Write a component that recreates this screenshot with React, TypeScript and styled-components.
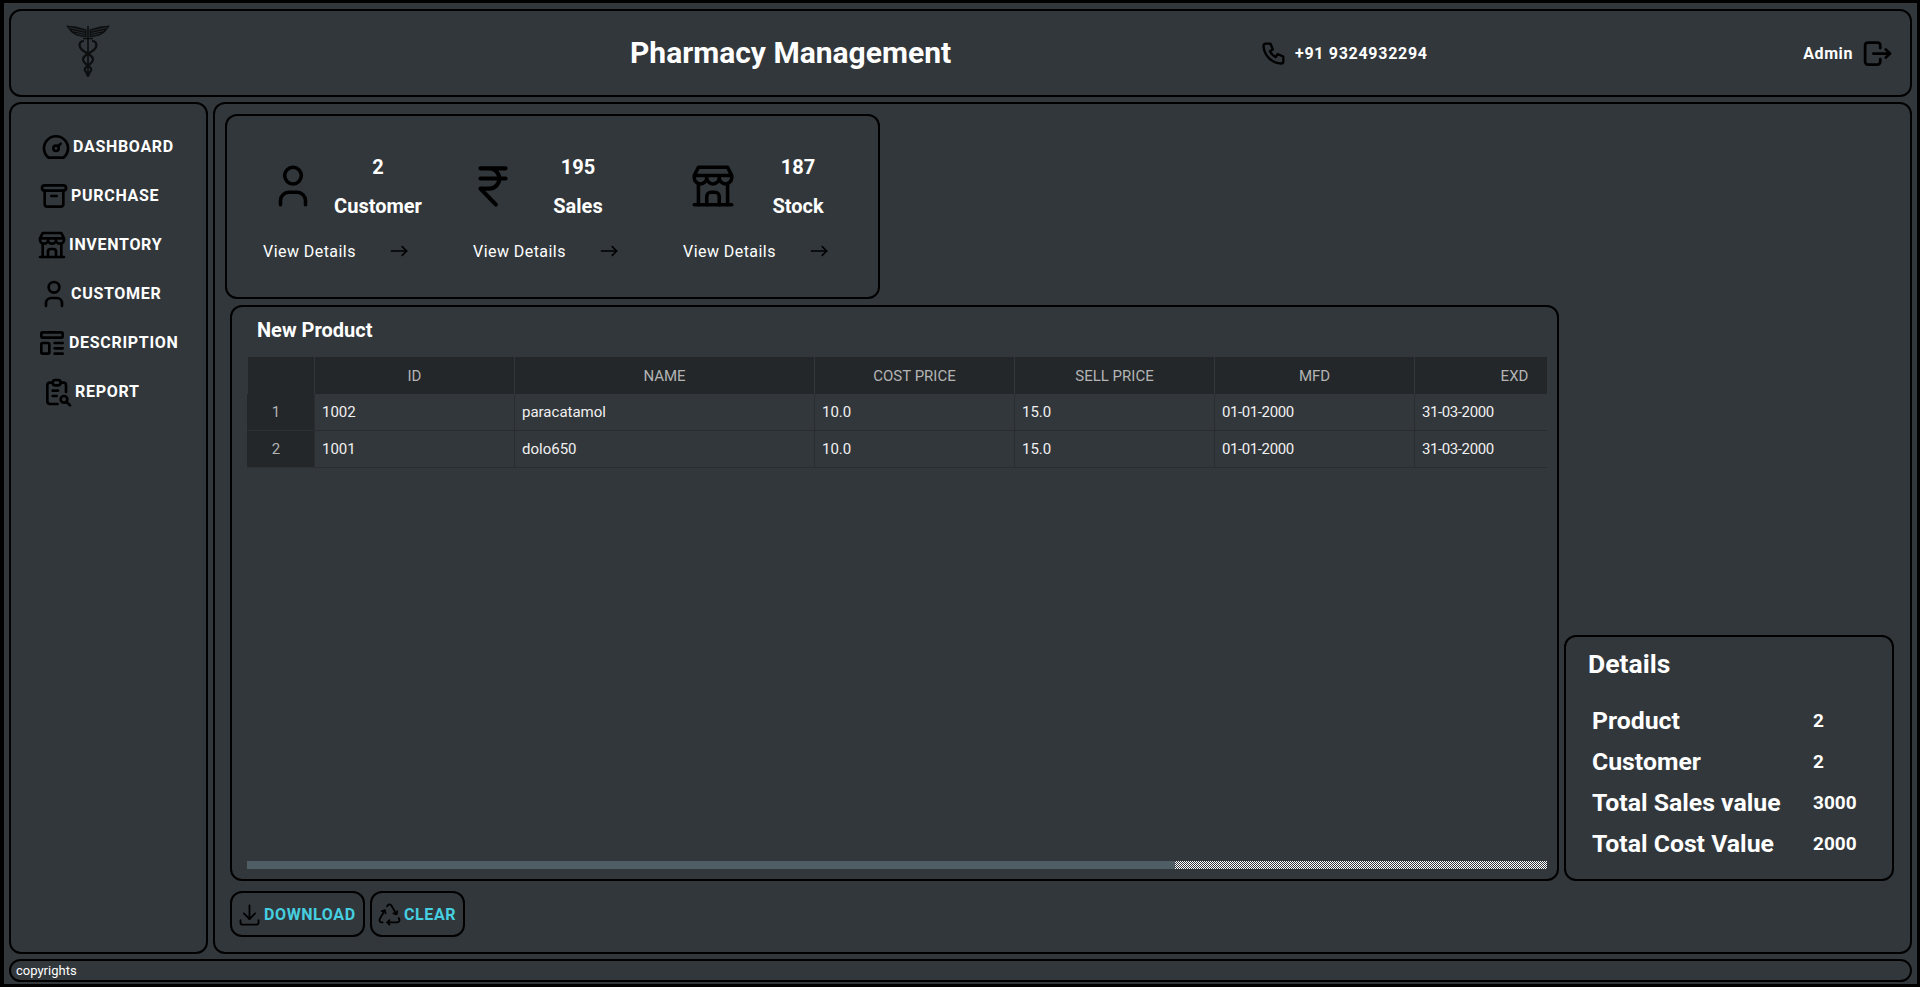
import styled, { createGlobalStyle } from 'styled-components';
import {
  TbArchive,
  TbArrowNarrowRight,
  TbBuildingStore,
  TbDashboard,
  TbDownload,
  TbLogout,
  TbPhone,
  TbRecycle,
  TbReportSearch,
  TbTemplate,
  TbUser,
} from 'react-icons/tb';

const Rupee = () => (
  <svg viewBox="0 0 24 24" fill="none" stroke="currentColor" strokeLinecap="round" strokeLinejoin="round">
    <path d="M17.200 4.700H6.800h3.600a4.200 4.200 0 0 1 0 8.400H6.800l6.400 6.600M6.800 8.900H17.200" />
  </svg>
);

const navItems = [
  { label: 'DASHBOARD', icon: <TbDashboard />, indent: 29 },
  { label: 'PURCHASE', icon: <TbArchive />, indent: 27 },
  { label: 'INVENTORY', icon: <TbBuildingStore />, indent: 25 },
  { label: 'CUSTOMER', icon: <TbUser />, indent: 27 },
  { label: 'DESCRIPTION', icon: <TbTemplate />, indent: 25 },
  { label: 'REPORT', icon: <TbReportSearch />, indent: 31 },
];

const stats = [
  { value: '2', label: 'Customer', icon: <TbUser />, iconWidth: 60, iconSize: 50 },
  { value: '195', label: 'Sales', icon: <Rupee />, iconWidth: 40, iconSize: 58 },
  { value: '187', label: 'Stock', icon: <TbBuildingStore />, iconWidth: 60, iconSize: 50 },
];

const columns = [
  { label: 'ID', width: 200 },
  { label: 'NAME', width: 300 },
  { label: 'COST PRICE', width: 200 },
  { label: 'SELL PRICE', width: 200 },
  { label: 'MFD', width: 200 },
  { label: 'EXD', width: 200 },
];

const products = [
  ['1002', 'paracatamol', '10.0', '15.0', '01-01-2000', '31-03-2000'],
  ['1001', 'dolo650', '10.0', '15.0', '01-01-2000', '31-03-2000'],
];

const details = [
  ['Product', '2'],
  ['Customer', '2'],
  ['Total Sales value', '3000'],
  ['Total Cost Value', '2000'],
];

const Caduceus = () => (
  <svg width="44" height="54" viewBox="0 0 44 54" fill="none" stroke="#0c0e10">
    <path
      d="M20.5 13C14 13 8 11 5 8L0 1.5 10 2.5 20.5 5.5ZM23.5 13C30 13 36 11 39 8L44 1.5 34 2.5 23.5 5.5Z"
      fill="#0c0e10"
      stroke="none"
    />
    <path
      d="M3 3.500 19 7M6 6.500l13 3M10 9.500l9 2M41 3.500 25 7M38 6.500l-13 3M34 9.500l-9 2"
      stroke="#32373b"
      strokeWidth="0.7"
    />
    <path d="M22 2V53" strokeWidth="1.6" />
    <path d="M17 14.500H27" strokeWidth="1.6" />
    <path
      d="M18 17C14 17 13 20 14 23 15.500 27 20 28 24 31 28 34 28 37 24 40 20 43 17 45 20 48L22 52"
      strokeWidth="2.2"
    />
    <path
      d="M26 17C30 17 31 20 30 23 28.500 27 24 28 20 31 16 34 16 37 20 40 24 43 27 45 24 48L22 52"
      strokeWidth="2.2"
    />
  </svg>
);

const App = () => {
  return (
    <Screen>
      <GlobalStyle />
      <Header>
        <Logo>
          <Caduceus />
        </Logo>
        <Title>Pharmacy Management</Title>
        <Phone>
          <TbPhone />
          +91 9324932294
        </Phone>
        <Admin>
          Admin
          <TbLogout />
        </Admin>
      </Header>

      <Sidebar>
        {navItems.map((item) => (
          <NavItem key={item.label} $indent={item.indent}>
            {item.icon}
            {item.label}
          </NavItem>
        ))}
      </Sidebar>

      <Main>
        <StatsCard>
          {stats.map((stat) => (
            <Stat key={stat.label}>
              <StatTop>
                <StatIcon $width={stat.iconWidth} $size={stat.iconSize}>
                  {stat.icon}
                </StatIcon>
                <StatText>
                  <StatValue>{stat.value}</StatValue>
                  <StatLabel>{stat.label}</StatLabel>
                </StatText>
              </StatTop>
              <ViewDetails>
                View Details
                <TbArrowNarrowRight />
              </ViewDetails>
            </Stat>
          ))}
        </StatsCard>

        <MiddleRow>
          <ProductPanel>
            <PanelTitle>New Product</PanelTitle>
            <TableClip>
              <Table>
                <thead>
                  <tr>
                    <HeadCell $width={67} />
                    {columns.map((column) => (
                      <HeadCell key={column.label} $width={column.width}>
                        {column.label}
                      </HeadCell>
                    ))}
                  </tr>
                </thead>
                <tbody>
                  {products.map((row, index) => (
                    <tr key={row[0]}>
                      <RowHead>{index + 1}</RowHead>
                      {row.map((cell, cellIndex) => (
                        <Cell key={cellIndex} $tight={cellIndex >= 4}>
                          {cell}
                        </Cell>
                      ))}
                    </tr>
                  ))}
                </tbody>
              </Table>
            </TableClip>
            <ScrollTrack>
              <ScrollThumb />
            </ScrollTrack>
          </ProductPanel>

          <DetailsCard>
            <DetailsTitle>Details</DetailsTitle>
            <DetailsList>
              {details.map(([label, value]) => (
                <DetailsRow key={label}>
                  <DetailsLabel>{label}</DetailsLabel>
                  <DetailsValue>{value}</DetailsValue>
                </DetailsRow>
              ))}
            </DetailsList>
          </DetailsCard>
        </MiddleRow>

        <Actions>
          <ActionButton $width={135}>
            <TbDownload />
            DOWNLOAD
          </ActionButton>
          <ActionButton $width={95}>
            <TbRecycle />
            CLEAR
          </ActionButton>
        </Actions>
      </Main>

      <Footer>copyrights</Footer>
    </Screen>
  );
};

export default App;

const GlobalStyle = createGlobalStyle`
  html, body {
    margin: 0;
    padding: 0;
    background: #000;
  }
  * {
    box-sizing: border-box;
  }
`;

const Screen = styled.div`
  width: 1920px;
  height: 987px;
  border: 3px solid #000;
  border-left-width: 4px;
  background: #32373b;
  padding: 6px 7px 2px 5px;
  display: grid;
  grid-template-columns: 199px 1fr;
  grid-template-rows: 88px 1fr 23px;
  gap: 5px;
  color: #fff;
  font-family: Roboto, 'Liberation Sans', sans-serif;
`;

const Box = styled.div`
  border: 2px solid #000;
  border-radius: 12px;
`;

const Header = styled(Box)`
  grid-column: 1 / 3;
  display: grid;
  grid-template-columns: 619px 630px 1fr auto;
  align-items: center;
  padding-right: 16px;
`;

const Logo = styled.div`
  padding-left: 55px;
  display: flex;
  margin-top: -4px;
`;

const Title = styled.h1`
  margin: 0;
  font-size: 30px;
  font-weight: 700;
  line-height: 36px;
`;

const Phone = styled.div`
  display: flex;
  align-items: center;
  gap: 7px;
  font-size: 16px;
  font-weight: 700;
  letter-spacing: 0.7px;

  svg {
    width: 28px;
    height: 28px;
    color: #000;
  }
`;

const Admin = styled(Phone)`
  gap: 8px;
  letter-spacing: 0.6px;

  svg {
    width: 33px;
    height: 33px;
  }
`;

const Sidebar = styled(Box)`
  padding-top: 18px;
`;

const NavItem = styled.div<{ $indent: number }>`
  height: 49px;
  display: flex;
  align-items: center;
  gap: 1px;
  padding-left: ${({ $indent }) => $indent}px;
  font-size: 16px;
  font-weight: 700;
  letter-spacing: 0.7px;

  svg {
    width: 32px;
    height: 32px;
    color: #000;
  }
`;

const Main = styled(Box)`
  display: flex;
  flex-direction: column;
  padding: 10px 16px 14px 10px;
`;

const StatsCard = styled(Box)`
  width: 655px;
  height: 185px;
  display: flex;
  padding: 31px 0 0 36px;
`;

const Stat = styled.div`
  flex: none;
  width: 210px;
`;

const StatTop = styled.div`
  display: flex;
  align-items: center;
  width: 170px;
  height: 78px;
`;

const StatIcon = styled.div<{ $width: number; $size: number }>`
  flex: none;
  width: ${({ $width }) => $width}px;
  display: flex;
  justify-content: center;

  svg {
    flex: none;
    width: ${({ $size }) => $size}px;
    height: ${({ $size }) => $size}px;
    color: #000;
    stroke-width: 1.7;
  }
`;

const StatText = styled.div`
  flex: 1;
  text-align: center;
  font-weight: 700;
`;

const StatValue = styled.div`
  font-size: 20px;
  line-height: 24px;
  margin-bottom: 15px;
`;

const StatLabel = styled.div`
  font-size: 20px;
  line-height: 24px;
`;

const ViewDetails = styled.div`
  display: flex;
  align-items: center;
  gap: 30px;
  margin-top: 12px;
  height: 28px;
  font-size: 16px;
  letter-spacing: 0.45px;

  svg {
    width: 26px;
    height: 26px;
    color: #000;
    stroke-width: 1.5;
  }
`;

const MiddleRow = styled.div`
  display: flex;
  align-items: flex-end;
  gap: 5px;
  margin: 6px 0 0 5px;
`;

const ProductPanel = styled(Box)`
  width: 1329px;
  height: 576px;
  display: flex;
  flex-direction: column;
  padding: 0 10px 10px 15px;
`;

const PanelTitle = styled.h2`
  margin: 0;
  height: 50px;
  padding: 11px 0 0 10px;
  font-size: 20px;
  line-height: 24px;
  font-weight: 700;
`;

const TableClip = styled.div`
  flex: 1;
  overflow: hidden;
`;

const Table = styled.table`
  width: 1367px;
  table-layout: fixed;
  border-collapse: separate;
  border-spacing: 0;
  font-size: 15px;
`;

const HeadCell = styled.th<{ $width: number }>`
  width: ${({ $width }) => $width}px;
  height: 37px;
  padding: 0;
  background: #23272a;
  border-left: 1px solid #32373b;
  color: #b4b4b4;
  font-weight: 400;
  font-size: 15px;
`;

const RowHead = styled.td`
  height: 37px;
  padding: 0 9px 0 0;
  background: #23272a;
  border-bottom: 1px solid #2b3033;
  color: #b4b4b4;
  text-align: center;
`;

const Cell = styled.td<{ $tight: boolean }>`
  height: 37px;
  padding: 0 0 0 7px;
  border-left: 1px solid #292d30;
  border-bottom: 1px solid #292d30;
  color: #f0f0f0;
  letter-spacing: ${({ $tight }) => ($tight ? '-0.4px' : '0')};
`;

const ScrollTrack = styled.div`
  height: 8px;
  background: conic-gradient(#fff 25%, #32373b 0 50%, #fff 0 75%, #32373b 0) 0 0 / 2px 2px;
`;

const ScrollThumb = styled.div`
  width: 928px;
  height: 100%;
  background: #4f5d65;
`;

const DetailsCard = styled(Box)`
  width: 330px;
  height: 246px;
  padding: 11px 0 0 22px;
`;

const DetailsTitle = styled.h3`
  margin: 0;
  font-size: 26.5px;
  line-height: 32px;
  font-weight: 700;
`;

const DetailsList = styled.div`
  margin: 20px 0 0 4px;
`;

const DetailsRow = styled.div`
  height: 41px;
  display: flex;
  align-items: center;
`;

const DetailsLabel = styled.div`
  width: 221px;
  font-size: 24.8px;
  font-weight: 700;
`;

const DetailsValue = styled.div`
  font-size: 19px;
  font-weight: 700;
`;

const Actions = styled.div`
  display: flex;
  gap: 5px;
  margin: 10px 0 0 5px;
`;

const ActionButton = styled(Box)<{ $width: number }>`
  width: ${({ $width }) => $width}px;
  height: 46px;
  display: flex;
  align-items: center;
  gap: 1px;
  padding-left: 4px;
  color: #45cfe0;
  font-size: 16px;
  font-weight: 700;
  letter-spacing: 0.6px;

  svg {
    flex: none;
    width: 27px;
    height: 27px;
    color: #000;
    stroke-width: 1.6;
  }
`;

const Footer = styled(Box)`
  grid-column: 1 / 3;
  display: flex;
  align-items: center;
  padding-left: 5px;
  font-size: 13px;
`;
